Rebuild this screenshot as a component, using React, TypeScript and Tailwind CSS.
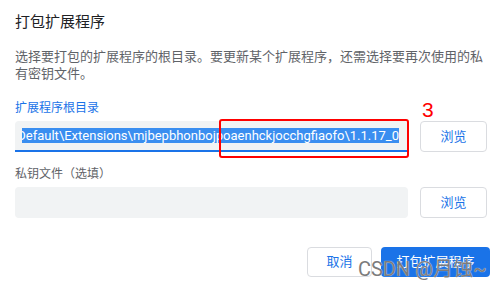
import React from "react";

export default function App() {
  return (
    <div className="relative w-[502px] h-[289px] bg-white overflow-hidden pl-[15px] font-[Roboto,'Noto_Sans_CJK_SC',sans-serif]">
      <div className="pt-[12px] text-[15px] leading-[20px] text-[#202124]">打包扩展程序</div>
      <div className="mt-[16px] w-[472px] text-[13px] leading-[17px] text-[#5f6368]">
        选择要打包的扩展程序的根目录。要更新某个扩展程序，还需选择要再次使用的私有密钥文件。
      </div>
      <div className="mt-[18px] text-[12px] leading-[16px] text-[#1a73e8]">扩展程序根目录</div>
      <div className="mt-[5px] flex gap-[12px]">
        <div className="w-[393px] h-[31px] bg-[#f1f3f4] rounded-t-[4px] border-b-2 border-[#1a73e8] pl-[7px] pr-[9px] flex items-center">
          <div className="w-full overflow-hidden flex justify-end">
            <span className="whitespace-nowrap shrink-0 bg-[#3a8ef0] text-white text-[13px] leading-[15px]">
              Default\Extensions\mjbepbhonbojpoaenhckjocchgfiaofo\1.1.17_0
            </span>
          </div>
        </div>
        <button className="w-[67px] h-[31px] bg-white border border-[#dadce0] rounded-[4px] text-[13px] text-[#1a73e8] flex items-center justify-center">
          浏览
        </button>
      </div>
      <div className="mt-[14px] text-[12px] leading-[16px] text-[#5f6368]">私钥文件（选填）</div>
      <div className="mt-[5px] flex gap-[12px]">
        <div className="w-[393px] h-[31px] bg-[#f1f3f4] rounded-[4px]"></div>
        <button className="w-[67px] h-[31px] bg-white border border-[#dadce0] rounded-[4px] text-[13px] text-[#1a73e8] flex items-center justify-center">
          浏览
        </button>
      </div>
      <div className="mt-[29px] flex justify-end gap-[9px] pr-[12px]">
        <button className="w-[65px] h-[30px] bg-white border border-[#dadce0] rounded-[4px] text-[13px] text-[#1a73e8] flex items-center justify-center">
          取消
        </button>
        <button className="w-[109px] h-[30px] bg-[#1a73e8] rounded-[4px] text-[13px] text-white flex items-center justify-center">
          打包扩展程序
        </button>
      </div>

      <div className="absolute left-[219px] top-[119px] w-[190px] h-[39px] border-2 border-[#ff0000] rounded-[3px]"></div>
      <div className="absolute left-[422px] top-[98px] text-[21px] leading-[24px] text-[#ff0000] font-['Liberation_Sans',sans-serif]">3</div>
      <div className="absolute left-[358px] top-[256px] text-[20px] leading-[26px] text-[#7c7c7c] whitespace-nowrap [text-shadow:0_0_1px_#ffffff]">
        CSDN @月蚀~
      </div>
    </div>
  );
}
